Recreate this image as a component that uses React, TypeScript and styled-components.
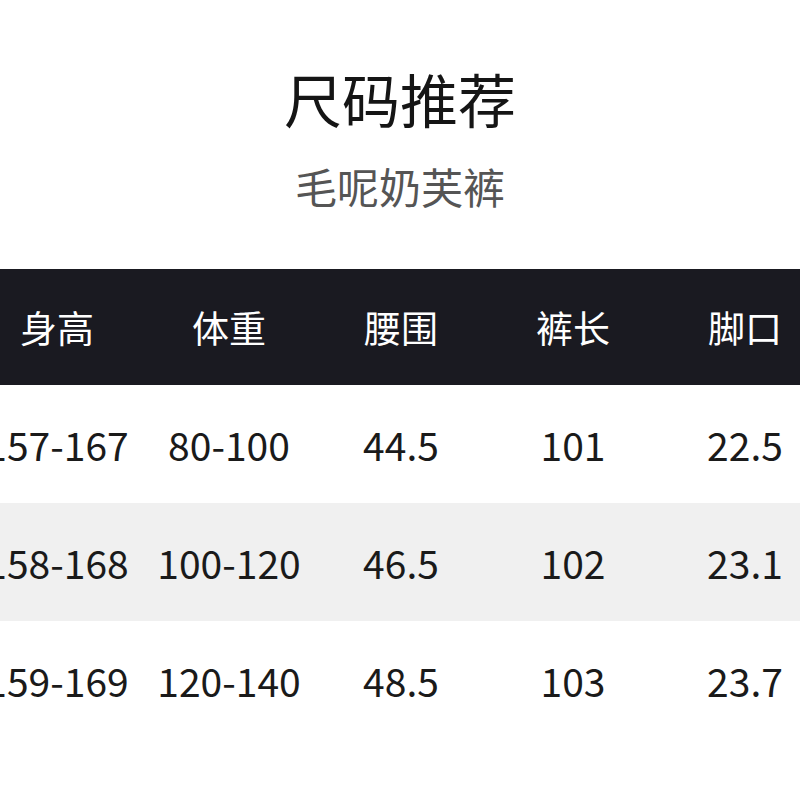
import React from 'react';
import styled, { createGlobalStyle } from 'styled-components';

interface SizeRow {
  height: string;
  weight: string;
  waist: string;
  length: string;
  hem: string;
}

const columns = ['身高', '体重', '腰围', '裤长', '脚口'];

const rows: SizeRow[] = [
  { height: '157-167', weight: '80-100', waist: '44.5', length: '101', hem: '22.5' },
  { height: '158-168', weight: '100-120', waist: '46.5', length: '102', hem: '23.1' },
  { height: '159-169', weight: '120-140', waist: '48.5', length: '103', hem: '23.7' },
];

const GlobalStyle = createGlobalStyle`
  html, body {
    margin: 0;
    padding: 0;
    background: #ffffff;
    overflow: hidden;
  }
  body {
    font-family: "Noto Sans CJK SC", "Noto Sans", sans-serif;
  }
`;

const App: React.FC = () => {
  return (
    <Page>
      <GlobalStyle />
      <Title>尺码推荐</Title>
      <Subtitle>毛呢奶芙裤</Subtitle>

      {/* table is wider than the page, first and last column get cut */}
      <Table>
        <HeaderRow>
          {columns.map(c => (
            <HeaderCell key={c}>{c}</HeaderCell>
          ))}
        </HeaderRow>
        {rows.map((r, i) => (
          <DataRow key={r.height} striped={i % 2 === 1}>
            <Cell>{r.height}</Cell>
            <Cell>{r.weight}</Cell>
            <Cell>{r.waist}</Cell>
            <Cell>{r.length}</Cell>
            <Cell>{r.hem}</Cell>
          </DataRow>
        ))}
      </Table>
    </Page>
  );
};

export default App;

const Page = styled.div`
  width: 800px;
  height: 800px;
  overflow: hidden;
  display: flex;
  flex-direction: column;
  align-items: center;
  padding-top: 69px;
  box-sizing: border-box;
  background: #ffffff;
`;

const Title = styled.h1`
  margin: 0;
  font-size: 58px;
  line-height: 58px;
  font-weight: 400;
  color: #151515;
`;

const Subtitle = styled.h2`
  margin: 38px 0 0;
  font-size: 42px;
  line-height: 42px;
  font-weight: 400;
  color: #555555;
`;

const Table = styled.div`
  margin-top: 62px;
  align-self: flex-start;
  margin-left: -29px;
  width: 860px;
  display: flex;
  flex-direction: column;
`;

const HeaderRow = styled.div`
  display: grid;
  grid-template-columns: repeat(5, 172px);
  height: 116px;
  background: #1a1a21;
  align-items: center;
`;

const HeaderCell = styled.div`
  text-align: center;
  color: #ffffff;
  font-size: 37px;
  line-height: 1;
  font-weight: 400;
`;

const DataRow = styled.div<{ striped?: boolean }>`
  display: grid;
  grid-template-columns: repeat(5, 172px);
  height: 118px;
  align-items: center;
  background: ${p => (p.striped ? '#f0f0f0' : '#ffffff')};
`;

const Cell = styled.div`
  text-align: center;
  color: #1a1a1a;
  font-size: 39px;
  line-height: 1;
  font-weight: 400;
  white-space: nowrap;
`;
